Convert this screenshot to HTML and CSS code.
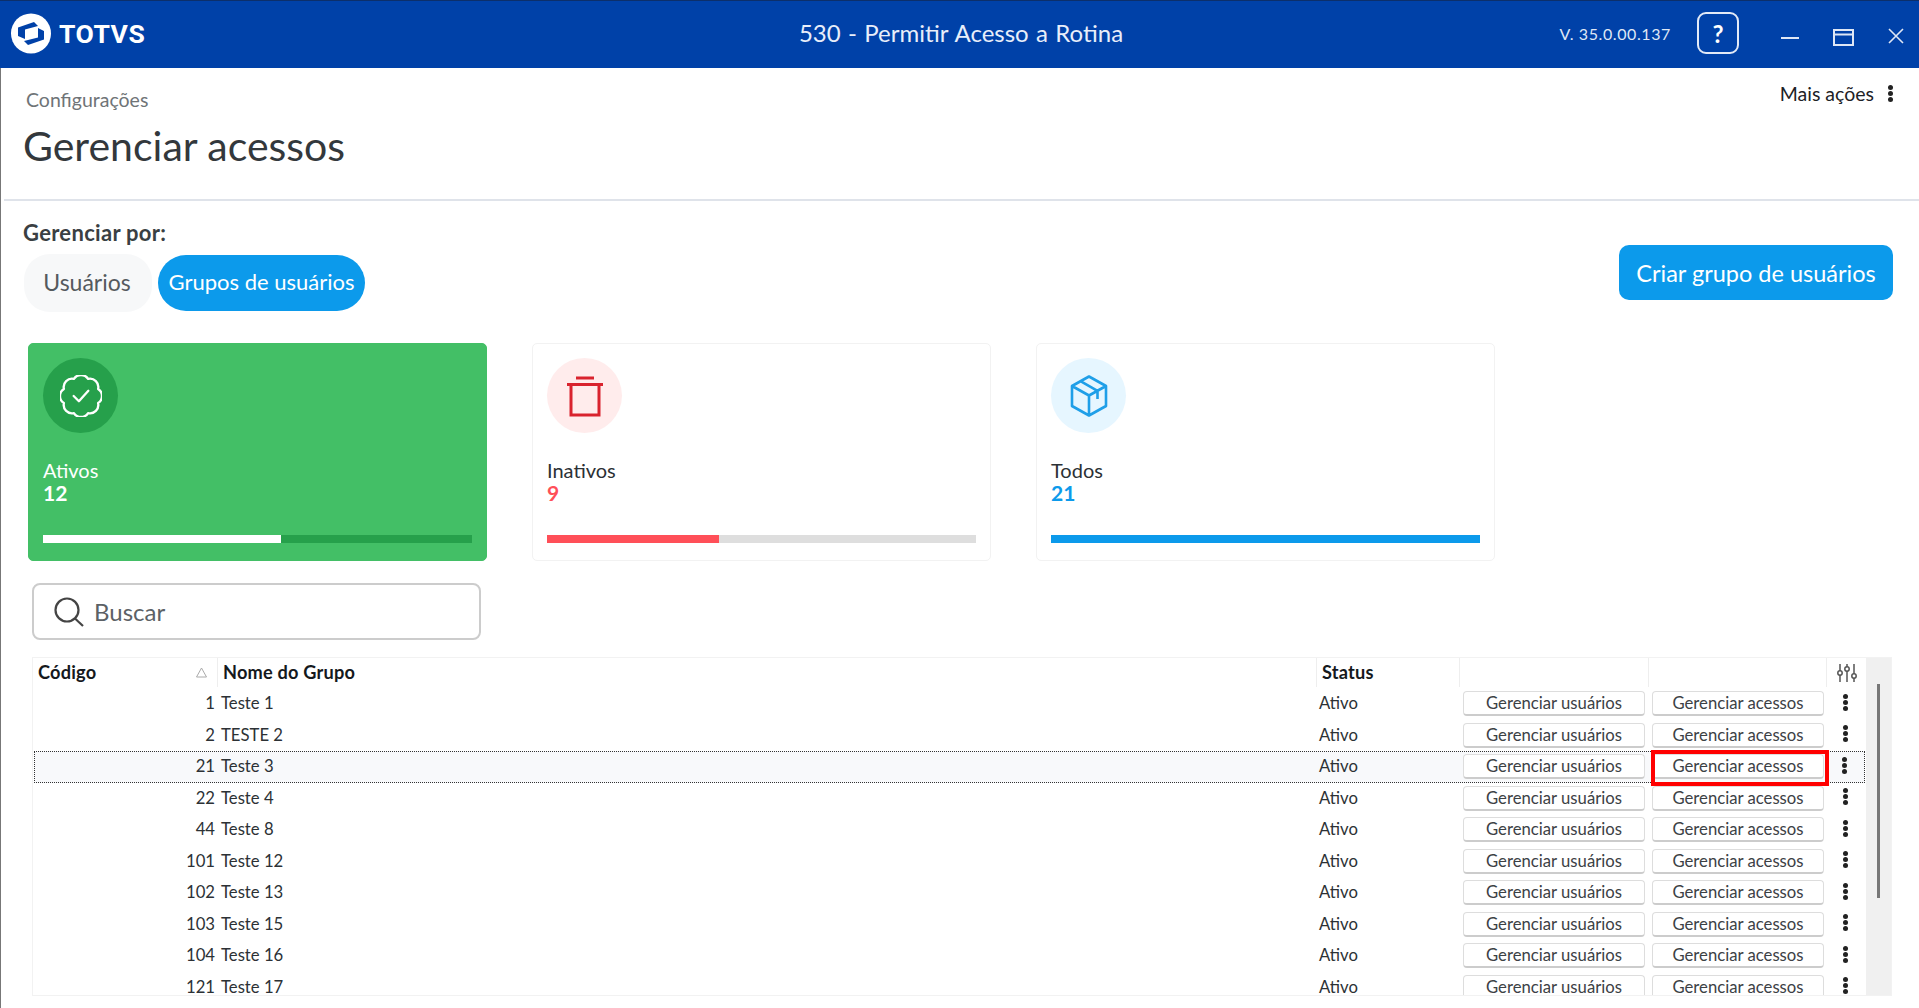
FILE: index.html
```html
<!DOCTYPE html>
<html lang="pt-BR">
<head>
<meta charset="utf-8">
<title>530 - Permitir Acesso a Rotina</title>
<link rel="stylesheet" href="styles.css">
</head>
<body>
<header class="titlebar">
  <div class="brand">
    <svg class="brand-mark" viewBox="0 0 40 40" aria-hidden="true">
      <circle cx="20" cy="20" r="20" fill="#fff"/>
      <path d="M7 14 L23 8.5 L27 12.5 L14 16 V25.5 L7 22.5 Z M33 26 L17 31.5 L13 27.5 L27 24 V14.5 L33 17.5 Z" fill="#0041a8"/>
    </svg>
    <span class="brand-name">TOTVS</span>
  </div>
  <div class="app-title">530 - Permitir Acesso a Rotina</div>
  <div class="win-tools">
    <span class="version">V. 35.0.00.137</span>
    <span class="help">?</span>
    <svg class="win-min" viewBox="0 0 18 4" aria-hidden="true"><path d="M0 2H18" stroke="#dfe7f5" stroke-width="2"/></svg>
    <svg class="win-max" viewBox="0 0 21 17" aria-hidden="true"><path d="M1 1H20V16H1Z M1 5.5H20" fill="none" stroke="#dfe7f5" stroke-width="2"/></svg>
    <svg class="win-close" viewBox="0 0 16 16" aria-hidden="true"><path d="M1 1L15 15M15 1L1 15" stroke="#dfe7f5" stroke-width="1.6"/></svg>
  </div>
</header>

<main class="page">
  <section class="page-head">
    <div>
      <div class="crumb">Configurações</div>
      <h1 class="page-title">Gerenciar acessos</h1>
    </div>
    <div class="more">Mais ações <span class="kebab kebab-more"></span></div>
  </section>

  <section class="manage">
    <div>
      <div class="manage-label">Gerenciar por:</div>
      <div class="pills">
        <span class="pill">Usuários</span>
        <span class="pill pill-on">Grupos de usuários</span>
      </div>
    </div>
    <button class="create">Criar grupo de usuários</button>
  </section>

  <section class="cards">
    <article class="card card-green">
      <div class="disc disc-green">
        <svg class="disc-icon" viewBox="2 2 20 20" fill="none" stroke="#fff" stroke-width="1.1" stroke-linejoin="round" stroke-linecap="round" aria-hidden="true"><path d="M3.85 8.62a4 4 0 0 1 4.78-4.77 4 4 0 0 1 6.74 0 4 4 0 0 1 4.78 4.78 4 4 0 0 1 0 6.74 4 4 0 0 1-4.77 4.78 4 4 0 0 1-6.75 0 4 4 0 0 1-4.78-4.77 4 4 0 0 1 0-6.76Z"/><path d="m8.5 12 2.5 2.5 4.5-5"/></svg>
      </div>
      <div class="card-label">Ativos</div>
      <div class="card-num">12</div>
      <div class="bar bar-green"><div class="fill fill-white"></div></div>
    </article>
    <article class="card">
      <div class="disc disc-red">
        <svg class="disc-icon" viewBox="0 0 42 42" fill="none" stroke="#d9232e" stroke-width="3" aria-hidden="true"><path d="M12 3H30M3 9.5H39M7 9.5V40H35V9.5"/></svg>
      </div>
      <div class="card-label">Inativos</div>
      <div class="card-num num-red">9</div>
      <div class="bar"><div class="fill fill-red"></div></div>
    </article>
    <article class="card">
      <div class="disc disc-blue">
        <svg class="disc-icon" viewBox="0 0 42 42" fill="none" stroke="#1f9fe8" stroke-width="2.6" stroke-linejoin="round" aria-hidden="true"><path d="M21 1.5L38 11V31L21 40.5L4 31V11Z M4 11L21 20.5L38 11 M21 20.5V40.5 M12.5 6.2L29.5 15.8V24"/></svg>
      </div>
      <div class="card-label">Todos</div>
      <div class="card-num num-blue">21</div>
      <div class="bar"><div class="fill fill-blue"></div></div>
    </article>
  </section>

  <div class="search">
    <svg class="search-icon" viewBox="0 0 30 30" fill="none" stroke="#444" stroke-width="2.2" aria-hidden="true"><circle cx="13" cy="13" r="11.5"/><path d="M21 21.5L29 29"/></svg>
    <span class="search-text">Buscar</span>
  </div>

  <section class="table">
    <div class="table-main">
      <div class="row thead">
        <div class="th th-code">Código <svg class="sort" viewBox="0 0 11 11" aria-hidden="true"><path d="M5.5 1L10.5 10H.5Z" fill="none" stroke="#aaa"/></svg></div>
        <div class="th">Nome do Grupo</div>
        <div class="th">Status</div>
        <div class="th"></div>
        <div class="th"></div>
        <div class="th th-tool">
          <svg class="sliders" viewBox="0 0 20 18" fill="none" stroke="#555" stroke-width="1.5" aria-hidden="true"><path d="M3 0V18M10 0V18M17 0V18"/><circle cx="3" cy="9" r="2.2" fill="#fff"/><circle cx="10" cy="5" r="2.2" fill="#fff"/><circle cx="17" cy="12" r="2.2" fill="#fff"/></svg>
        </div>
      </div>
      <div class="row"><div class="code">1</div><div class="name">Teste 1</div><div class="status">Ativo</div><div><button class="act act-users">Gerenciar usuários</button></div><div><button class="act">Gerenciar acessos</button></div><div class="more-cell"><span class="kebab"></span></div></div>
      <div class="row"><div class="code">2</div><div class="name">TESTE 2</div><div class="status">Ativo</div><div><button class="act act-users">Gerenciar usuários</button></div><div><button class="act">Gerenciar acessos</button></div><div class="more-cell"><span class="kebab"></span></div></div>
      <div class="row row-current"><div class="code">21</div><div class="name">Teste 3</div><div class="status">Ativo</div><div><button class="act act-users">Gerenciar usuários</button></div><div class="marked"><button class="act">Gerenciar acessos</button><span class="redbox"></span></div><div class="more-cell"><span class="kebab"></span></div></div>
      <div class="row"><div class="code">22</div><div class="name">Teste 4</div><div class="status">Ativo</div><div><button class="act act-users">Gerenciar usuários</button></div><div><button class="act">Gerenciar acessos</button></div><div class="more-cell"><span class="kebab"></span></div></div>
      <div class="row"><div class="code">44</div><div class="name">Teste 8</div><div class="status">Ativo</div><div><button class="act act-users">Gerenciar usuários</button></div><div><button class="act">Gerenciar acessos</button></div><div class="more-cell"><span class="kebab"></span></div></div>
      <div class="row"><div class="code">101</div><div class="name">Teste 12</div><div class="status">Ativo</div><div><button class="act act-users">Gerenciar usuários</button></div><div><button class="act">Gerenciar acessos</button></div><div class="more-cell"><span class="kebab"></span></div></div>
      <div class="row"><div class="code">102</div><div class="name">Teste 13</div><div class="status">Ativo</div><div><button class="act act-users">Gerenciar usuários</button></div><div><button class="act">Gerenciar acessos</button></div><div class="more-cell"><span class="kebab"></span></div></div>
      <div class="row"><div class="code">103</div><div class="name">Teste 15</div><div class="status">Ativo</div><div><button class="act act-users">Gerenciar usuários</button></div><div><button class="act">Gerenciar acessos</button></div><div class="more-cell"><span class="kebab"></span></div></div>
      <div class="row"><div class="code">104</div><div class="name">Teste 16</div><div class="status">Ativo</div><div><button class="act act-users">Gerenciar usuários</button></div><div><button class="act">Gerenciar acessos</button></div><div class="more-cell"><span class="kebab"></span></div></div>
      <div class="row"><div class="code">121</div><div class="name">Teste 17</div><div class="status">Ativo</div><div><button class="act act-users">Gerenciar usuários</button></div><div><button class="act">Gerenciar acessos</button></div><div class="more-cell"><span class="kebab"></span></div></div>
    </div>
    <div class="scrollbar"><div class="thumb"></div></div>
  </section>
</main>
</body>
</html>
```

FILE: styles.css
```css
* { box-sizing: border-box; }
html, body { margin: 0; height: 100%; }
body {
  overflow: hidden;
  background: #fff;
  color: #2c3135;
  font-family: "Lato", "Liberation Sans", sans-serif;
  display: flex;
  flex-direction: column;
}

/* Title bar */
.titlebar {
  flex: 0 0 68px;
  display: grid;
  grid-template-columns: 1fr auto 1fr;
  align-items: center;
  background: #0041a8;
  border-top: 1px solid #0c2f6b;
  padding-bottom: 3px;
  color: #fff;
}
.brand { display: flex; align-items: center; gap: 8px; padding-left: 11px; }
.brand-mark { width: 40px; height: 41px; }
.brand-name { font: 700 26.5px "Roboto", sans-serif; letter-spacing: 0.5px; }
.app-title { font-size: 24px; color: #e8eefa; word-spacing: 1.2px; padding: 0 0 1px 3px; }
.win-tools { display: flex; align-items: center; justify-content: flex-end; padding-right: 15px; }
.version { font-size: 16px; color: #dfe7f5; letter-spacing: 0.6px; margin: 1px 26px 0 0; }
.help {
  width: 42px; height: 42px;
  display: flex; align-items: center; justify-content: center;
  border: 2px solid #e3eaf7; border-radius: 9px;
  font-size: 24px; font-weight: 700; margin-right: 42px;
}
.win-min { width: 18px; height: 4px; margin: 10px 34px 0 0; }
.win-max { width: 21px; height: 17px; margin: 9px 34px 0 0; }
.win-close { width: 16px; height: 16px; margin-top: 6px; }

/* Page */
.page {
  flex: 1;
  border-left: 1px solid #777;
  padding-left: 3px;
  min-height: 0;
}
.page-head {
  height: 133px;
  display: flex;
  justify-content: space-between;
  border-bottom: 2px solid #dfe3ea;
  padding: 21px 26px 0 19px;
}
.crumb { font-size: 19.5px; line-height: 22px; color: #6f7477; margin-left: 3px; }
.page-title { margin: 11px 0 0; font-size: 41px; font-weight: 400; line-height: 48px; color: #33383c; }
.more { font-size: 19.5px; line-height: 22px; color: #1d2226; display: flex; align-items: center; gap: 14px; height: 16px; margin-top: -3px; }

.kebab {
  display: block;
  width: 5px; height: 5px;
  border-radius: 50%;
  background: #222;
  box-shadow: 0 -6px 0 #222, 0 6px 0 #222;
}
.kebab-more { margin-top: -1px; }

.manage {
  display: flex;
  justify-content: space-between;
  padding: 20px 26px 0 19px;
  height: 143px;
}
.manage-label { font-size: 22px; font-weight: 700; letter-spacing: 0.3px; line-height: 24px; color: #3a3f43; }
.pills { display: flex; align-items: center; gap: 6px; margin-top: 9px; }
.pill {
  height: 58px; width: 128px; margin-left: 1px;
  display: flex; align-items: center; justify-content: center;
  border-radius: 26px;
  background: #f7f8f9;
  color: #555a5e;
  font-size: 23px;
  padding: 0 2px 2px 0;
}
.pill-on {
  height: 56px; width: 207px; margin-left: 0;
  background: #0c9aeb; color: #fff; border-radius: 28px;
  font-size: 22px;
  padding-right: 0;
  margin-top: -1px;
}
.create {
  height: 55px; width: 274px; margin-top: 24px;
  border: 0; border-radius: 10px;
  background: #0c9aeb; color: #fff;
  font: 400 23.5px "Lato", sans-serif;
}

/* Cards */
.cards { display: flex; gap: 45px; padding-left: 24px; margin-top: -1px; }
.card {
  width: 459px; height: 218px;
  padding: 14px 14px 0;
  background: #fff;
  border: 1px solid #f2f2f2;
  border-radius: 5px;
}
.card-green { background: #43bf66; border-color: #43bf66; color: #fff; }
.disc { width: 75px; height: 75px; border-radius: 50%; display: flex; align-items: center; justify-content: center; }
.disc-green { background: #26a04b; }
.disc-red { background: #ffecec; }
.disc-blue { background: #e6f6ff; }
.disc-icon { width: 42px; height: 42px; }
.card-label { margin-top: 26px; font-size: 20px; line-height: 22px; }
.card-num { font-size: 21px; font-weight: 700; line-height: 23px; }
.num-red { color: #ff4f58; }
.num-blue { color: #0c9aeb; }
.bar { height: 8px; margin-top: 31px; background: #dedede; }
.bar-green { background: #26a04b; }
.fill { height: 100%; }
.fill-white { width: 55.4%; background: #fff; }
.fill-red { width: 40%; background: #ff4f58; }
.fill-blue { width: 100%; background: #0c9aeb; }

/* Search */
.search {
  width: 449px; height: 57px;
  margin: 22px 0 0 28px;
  display: flex; align-items: center; gap: 10px;
  padding-left: 20px;
  border: 2px solid #ccc;
  border-radius: 8px;
}
.search-icon { width: 30px; height: 30px; }
.search-text { font-size: 24px; color: #5c6166; }

/* Table */
.table {
  width: 1860px; height: 339px;
  margin: 17px 0 0 28px;
  display: flex;
  border: 1px solid #f2f2f2;
  overflow: hidden;
}
.table-main { width: 1833px; flex: none; }
.row {
  display: grid;
  grid-template-columns: 184px 1099px 143px 189px 178px 40px;
  height: 31.5px;
  align-items: center;
  font-size: 16.7px;
  line-height: 1;
  color: #2c3135;
}
.thead { height: 29px; margin-bottom: 1px; }
.th {
  height: 29px;
  padding-left: 5px;
  display: flex; align-items: center;
  border-left: 1px solid #eee;
  font-size: 18.2px; font-weight: 700; letter-spacing: 0.2px; color: #15191d;
}
.th-code { border-left: 0; justify-content: space-between; padding-right: 10px; }
.th-tool { justify-content: center; padding-left: 0; }
.sort { width: 11px; height: 11px; }
.sliders { width: 20px; height: 18px; }
.code { text-align: right; padding-right: 2px; }
.name { padding-left: 4px; }
.status { padding-left: 3px; }
.act {
  display: block;
  height: 25px;
  margin-left: 4px;
  width: 172px;
  padding: 0;
  background: #fff;
  border: 1px solid #ddd;
  border-bottom: 2px solid #ccc;
  border-radius: 4px;
  font: 400 16.7px "Lato", sans-serif;
  color: #3c4145;
}
.act-users { width: 182px; }
.more-cell { display: flex; justify-content: center; padding-right: 2px; padding-bottom: 3px; }
.row-current { background: #f8f9fb; outline: 1px dotted #333; outline-offset: -1px; margin-left: 1px; width: 1831px; grid-template-columns: 183px 1099px 143px 189px 178px 39px; }
.marked { position: relative; }
.redbox {
  position: absolute;
  left: 3px; right: -3px; top: -4px;
  height: 36px;
  border: 4px solid #f00;
}
.scrollbar { flex: 1; background: #f0f0f0; padding: 26px 0 0 11px; }
.thumb { width: 3px; height: 214px; background: #777; }
```
